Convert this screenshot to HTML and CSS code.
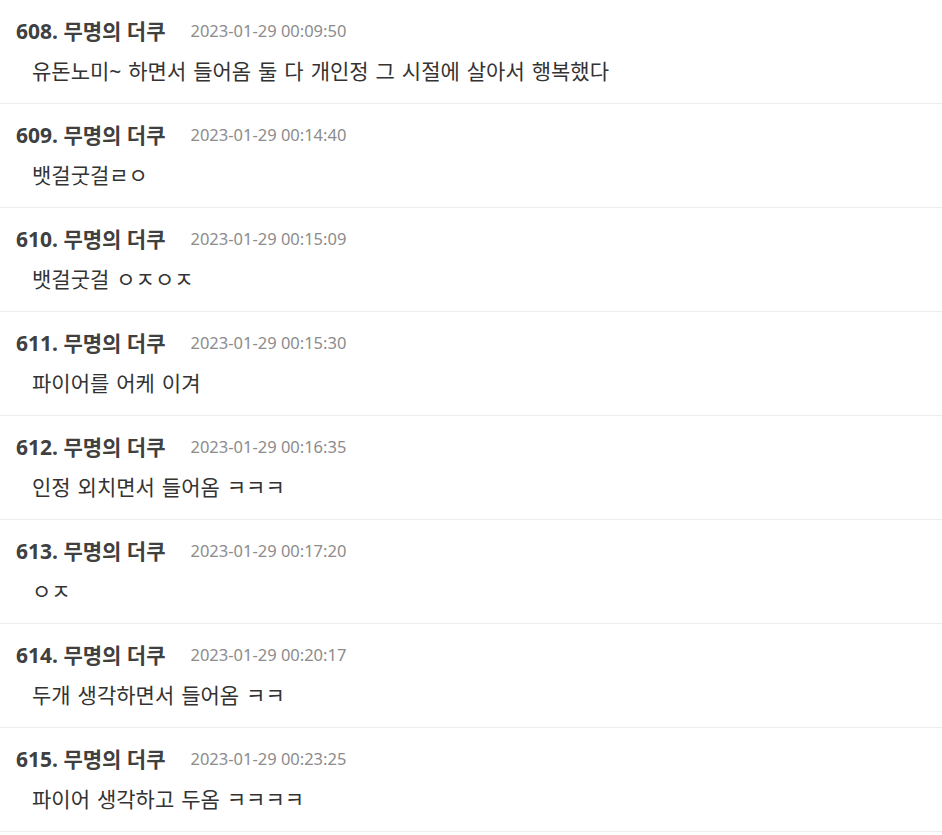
FILE: index.html
```html
<!DOCTYPE html>
<html lang="ko">
<head>
  <meta charset="UTF-8" />
  <title>댓글</title>
  <meta name="viewport" content="width=device-width, initial-scale=1.0" />
  <link rel="stylesheet" href="styles.css">
</head>
<body>

  <div class="thread">
    <div class="res">
      <div class="res-head"><span class="res-name">608. 무명의 더쿠</span><span class="res-date">2023-01-29 00:09:50</span></div>
      <div class="res-body">유돈노미~ 하면서 들어옴 둘 다 개인정 그 시절에 살아서 행복했다</div>
    </div>
    <div class="res">
      <div class="res-head"><span class="res-name">609. 무명의 더쿠</span><span class="res-date">2023-01-29 00:14:40</span></div>
      <div class="res-body">뱃걸굿걸ㄹㅇ</div>
    </div>
    <div class="res">
      <div class="res-head"><span class="res-name">610. 무명의 더쿠</span><span class="res-date">2023-01-29 00:15:09</span></div>
      <div class="res-body">뱃걸굿걸 ㅇㅈㅇㅈ</div>
    </div>
    <div class="res">
      <div class="res-head"><span class="res-name">611. 무명의 더쿠</span><span class="res-date">2023-01-29 00:15:30</span></div>
      <div class="res-body">파이어를 어케 이겨</div>
    </div>
    <div class="res">
      <div class="res-head"><span class="res-name">612. 무명의 더쿠</span><span class="res-date">2023-01-29 00:16:35</span></div>
      <div class="res-body">인정 외치면서 들어옴 ㅋㅋㅋ</div>
    </div>
    <div class="res">
      <div class="res-head"><span class="res-name">613. 무명의 더쿠</span><span class="res-date">2023-01-29 00:17:20</span></div>
      <div class="res-body">ㅇㅈ</div>
    </div>
    <div class="res">
      <div class="res-head"><span class="res-name">614. 무명의 더쿠</span><span class="res-date">2023-01-29 00:20:17</span></div>
      <div class="res-body">두개 생각하면서 들어옴 ㅋㅋ</div>
    </div>
    <div class="res">
      <div class="res-head"><span class="res-name">615. 무명의 더쿠</span><span class="res-date">2023-01-29 00:23:25</span></div>
      <div class="res-body">파이어 생각하고 두옴 ㅋㅋㅋㅋ</div>
    </div>
  </div>

</body>
</html>
```

FILE: styles.css
```css
* {
  box-sizing: border-box;
}

body {
  font-family: "Noto Sans", "Noto Sans CJK KR", sans-serif;
  background: #fff;
  color: #333;
  margin: 0;
  padding: 0;
}

.res {
  padding: 17px 16px 19px;
  border-bottom: 1px solid #eee;
}

.res-head {
  display: flex;
  align-items: center;
  gap: 25px;
  height: 26px;
}

.res-name {
  font-size: 21px;
  font-weight: bold;
  color: #404040;
}

.res-date {
  font-size: 16.5px;
  color: #8c8c8c;
}

.res-body {
  margin-top: 15px;
  padding-left: 16px;
  font-size: 21px;
  line-height: 26px;
  height: 26px;
  word-spacing: 1.5px;
  color: #333;
}
```
